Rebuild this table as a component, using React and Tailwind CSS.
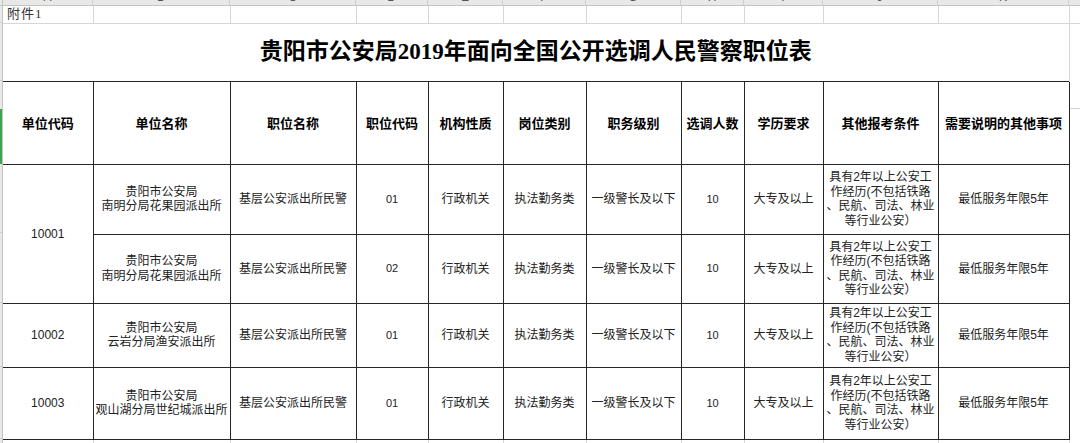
import React from "react";

const cols = [
  { l: "A", w: "w-[90px]" },
  { l: "B", w: "w-[137px]" },
  { l: "C", w: "w-[126px]" },
  { l: "D", w: "w-[72px]" },
  { l: "E", w: "w-[75px]" },
  { l: "F", w: "w-[83px]" },
  { l: "G", w: "w-[95px]" },
  { l: "H", w: "w-[63px]" },
  { l: "I", w: "w-[79px]" },
  { l: "J", w: "w-[115px]" },
  { l: "K", w: "w-[131px]" },
];

const headers = [
  "单位代码",
  "单位名称",
  "职位名称",
  "职位代码",
  "机构性质",
  "岗位类别",
  "职务级别",
  "选调人数",
  "学历要求",
  "其他报考条件",
  "需要说明的其他事项",
];

const rows = [
  { code: "10001", span: 2, unit: ["贵阳市公安局", "南明分局花果园派出所"], pcode: "01", h: "h-[70px]" },
  { code: null, unit: ["贵阳市公安局", "南明分局花果园派出所"], pcode: "02", h: "h-[69px]" },
  { code: "10002", span: 1, unit: ["贵阳市公安局", "云岩分局渔安派出所"], pcode: "01", h: "h-[64px]" },
  { code: "10003", span: 1, unit: ["贵阳市公安局", "观山湖分局世纪城派出所"], pcode: "01", h: "h-[72px]" },
];

const cond = ["具有2年以上公安工", "作经历(不包括铁路", "、民航、司法、林业", "等行业公安）"];

const td = "border border-[#262626] text-center align-middle p-0";

export default function App() {
  return (
    <div className="w-[1080px] h-[443px] overflow-hidden bg-white text-[#222] font-['Liberation_Sans','Noto_Sans_CJK_SC',sans-serif]">
      {/* column letter strip */}
      <div className="flex h-[6px] bg-[#e8e8e8] border-b border-[#c4c4c4] overflow-hidden">
        <div className="w-[3px] shrink-0 border-r border-[#c4c4c4]" />
        {cols.map((c) => (
          <div
            key={c.l}
            className={`${c.w} shrink-0 border-r border-[#cfcfcf] text-center text-[12px] leading-[12px] text-[#555] -mt-[9px]`}
          >
            {c.l}
          </div>
        ))}
        <div className="flex-1" />
      </div>

      <div className="flex">
        {/* row header strip */}
        <div className="w-[3px] shrink-0 bg-[#e8e8e8] border-r border-[#c4c4c4] flex flex-col">
          <div className="h-[17px] border-b border-[#cfcfcf]" />
          <div className="h-[58px] border-b border-[#cfcfcf]" />
          <div className="h-[28px]" />
          <div className="h-[55px] bg-[#3fa34d]" />
          <div className="h-[69px] border-b border-[#cfcfcf]" />
          <div className="h-[70px] border-b border-[#cfcfcf]" />
          <div className="h-[64px] border-b border-[#cfcfcf]" />
          <div className="h-[72px] border-b border-[#cfcfcf]" />
        </div>

        <table className="table-fixed border-collapse w-[1077px]">
          <colgroup>
            {cols.map((c) => (
              <col key={c.l} className={c.w} />
            ))}
            <col className="w-[11px]" />
          </colgroup>
          <tbody>
            {/* row 1 */}
            <tr className="h-[17px]">
              <td className="border-r border-b border-[#d6d6d6] p-0 pl-[4px] text-left align-middle text-[13px] leading-[16px] tracking-[1px] text-[#333] font-['Liberation_Serif','Noto_Sans_CJK_SC',serif] whitespace-nowrap">
                附件1
              </td>
              {cols.slice(1).map((c) => (
                <td key={c.l} className="border-r border-b border-[#d6d6d6] p-0" />
              ))}
              <td className="border-b border-[#d6d6d6] p-0" />
            </tr>
            {/* title row */}
            <tr className="h-[58px]">
              <td
                colSpan={11}
                className="border-r border-[#d6d6d6] p-0 text-center align-middle text-[23px] font-bold text-black font-['Liberation_Serif','Noto_Sans_CJK_SC',serif] whitespace-nowrap"
              >
                贵阳市公安局2019年面向全国公开选调人民警察职位表
              </td>
              <td className="p-0" />
            </tr>
            {/* header row */}
            <tr className="h-[83px]">
              {headers.map((h, i) => (
                <td
                  key={h}
                  className={`${td} ${i === 0 ? "border-l-0" : ""} text-[13px] font-bold text-black whitespace-nowrap font-['Noto_Sans_CJK_SC',sans-serif]`}
                >
                  {h}
                </td>
              ))}
              <td className="p-0 align-top">
                <div className="h-[28px] border-b border-[#d6d6d6]" />
              </td>
            </tr>
            {rows.map((r, idx) => (
              <tr key={idx} className={r.h}>
                {r.code && (
                  <td rowSpan={r.span} className={`${td} border-l-0 text-[12px]`}>
                    {r.code}
                  </td>
                )}
                <td className={`${td} text-[12px] leading-[14.5px] whitespace-nowrap`}>
                  <div>{r.unit[0]}</div>
                  <div>{r.unit[1]}</div>
                </td>
                <td className={`${td} text-[12px] whitespace-nowrap`}>基层公安派出所民警</td>
                <td className={`${td} text-[11px]`}>{r.pcode}</td>
                <td className={`${td} text-[12px] whitespace-nowrap`}>行政机关</td>
                <td className={`${td} text-[12px] whitespace-nowrap`}>执法勤务类</td>
                <td className={`${td} text-[12px] whitespace-nowrap`}>一级警长及以下</td>
                <td className={`${td} text-[11px]`}>10</td>
                <td className={`${td} text-[12px] whitespace-nowrap`}>大专及以上</td>
                <td className={`${td} text-[12px] leading-[14.5px] whitespace-nowrap`}>
                  {cond.map((c) => (
                    <div key={c}>{c}</div>
                  ))}
                </td>
                <td className={`${td} text-[12px] whitespace-nowrap`}>最低服务年限5年</td>
                <td className="p-0" />
              </tr>
            ))}
            {/* tail row */}
            <tr className="h-[6px]">
              {cols.map((c) => (
                <td key={c.l} className="border-r border-[#d6d6d6] p-0" />
              ))}
              <td className="p-0" />
            </tr>
          </tbody>
        </table>
      </div>
    </div>
  );
}
